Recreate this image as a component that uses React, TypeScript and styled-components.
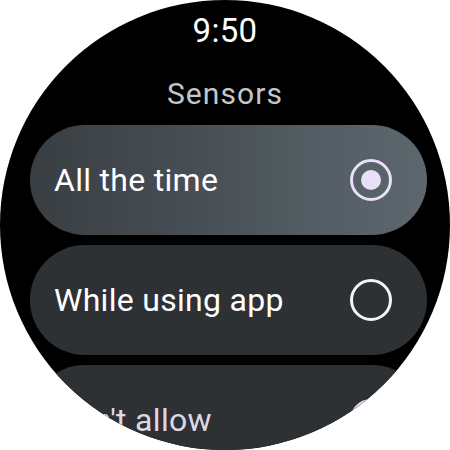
import React from 'react'
import styled, { createGlobalStyle } from 'styled-components'

const Global = createGlobalStyle`
  html, body {
    margin: 0;
    padding: 0;
    background: #ffffff;
  }
  body {
    font-family: Roboto, "Noto Sans", sans-serif;
  }
`

const Screen = styled.div`
  width: 450px;
  height: 450px;
  border-radius: 50%;
  background: #000;
  overflow: hidden;
  display: flex;
  flex-direction: column;
  align-items: center;
  box-sizing: border-box;
  padding-top: 13px;
`

const Time = styled.div`
  font-size: 33px;
  line-height: 36px;
  color: #ffffff;
  letter-spacing: 0.3px;
`

const Title = styled.div`
  margin-top: 27px;
  font-size: 30px;
  line-height: 36px;
  color: #c4c7ca;
  letter-spacing: 1.1px;
`

const List = styled.div`
  margin-top: 13px;
  width: 397px;
  margin-left: 7px;
  display: flex;
  flex-direction: column;
  gap: 10px;
`

const Chip = styled.div<{ $selected?: boolean }>`
  height: 110px;
  border-radius: 55px;
  flex-shrink: 0;
  display: flex;
  align-items: center;
  justify-content: space-between;
  padding: 0 35px 0 24px;
  background: ${p =>
    p.$selected
      ? 'linear-gradient(90deg, #393e42 0%, #454c51 35%, #525c62 70%, #5d686e 100%)'
      : '#2e3134'};
`

const Label = styled.span<{ $dim?: boolean }>`
  font-size: 32px;
  line-height: 36px;
  letter-spacing: 0.3px;
  color: ${p => (p.$dim ? '#dcd9e4' : '#ffffff')};
`

const Radio = styled.span<{ $checked?: boolean; $dim?: boolean }>`
  width: 42px;
  height: 42px;
  box-sizing: border-box;
  border-radius: 50%;
  border: 3.5px solid
    ${p => (p.$checked ? '#e8e0f8' : p.$dim ? '#dcd9e4' : '#f4f4f4')};
  display: flex;
  align-items: center;
  justify-content: center;
  &::after {
    content: '';
    display: ${p => (p.$checked ? 'block' : 'none')};
    width: 20px;
    height: 20px;
    border-radius: 50%;
    background: #e8e0f8;
  }
`

const options = [
  { label: 'All the time', checked: true },
  { label: 'While using app', checked: false },
  { label: "Don't allow", checked: false, dim: true },
]

export default function App() {
  return (
    <>
      <Global />
      <Screen>
        <Time>9:50</Time>
        <Title>Sensors</Title>
        <List>
          {options.map(o => (
            <Chip key={o.label} $selected={o.checked}>
              <Label $dim={o.dim}>{o.label}</Label>
              <Radio $checked={o.checked} $dim={o.dim} />
            </Chip>
          ))}
        </List>
      </Screen>
    </>
  )
}
